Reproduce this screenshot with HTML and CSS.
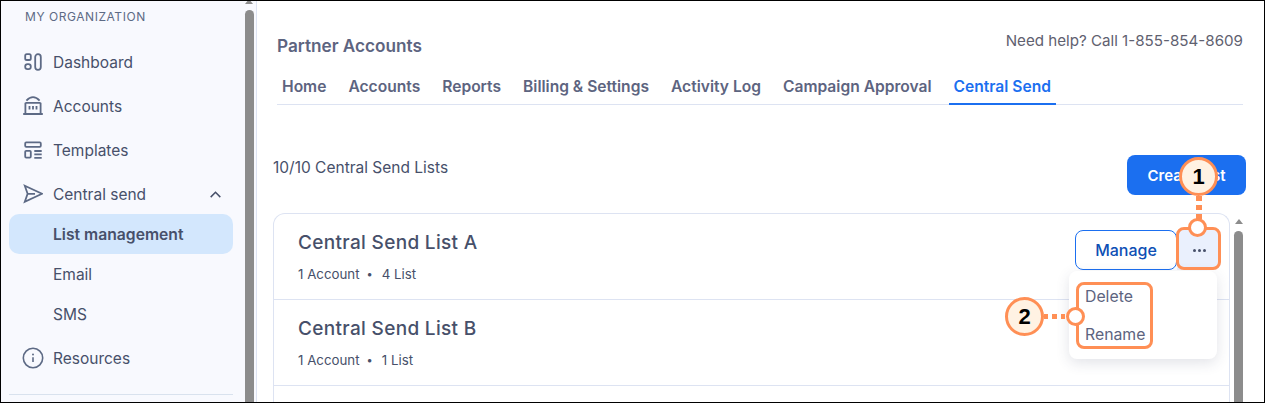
FILE: index.html
```html
<!DOCTYPE html>
<html lang="en">
<head>
<meta charset="utf-8">
<title>Central Send Lists</title>
<link rel="stylesheet" href="styles.css">
</head>
<body>
<div class="frame">
  <aside class="sidebar">
    <div class="org">MY ORGANIZATION</div>
    <nav class="nav">
      <a class="nav-item">
        <svg class="ico" viewBox="0 0 20 20"><rect x="2.2" y="2.2" width="5.6" height="5.8" rx="1.6"/><rect x="2.2" y="12.2" width="5.6" height="5" rx="2.4"/><rect x="12.2" y="2.2" width="5.6" height="15.6" rx="2.8"/></svg>
        <span>Dashboard</span>
      </a>
      <a class="nav-item">
        <svg class="ico" viewBox="0 0 20 20"><path d="M3.4 4.6C5.5 2.4 8 1.2 10 1.2s4.500 1.200 6.600 3.400M2.400 6.800h15.200M2.400 6.800V17M17.600 6.800V17M.2 18h19.600M6.500 10v3.600M10 10v3.600M13.500 10v3.600"/></svg>
        <span>Accounts</span>
      </a>
      <a class="nav-item">
        <svg class="ico" viewBox="0 0 20 20"><rect x="2.200" y="2.400" width="15.600" height="4.400" rx="1"/><rect x="2.200" y="10.800" width="5.600" height="6.800" rx="1"/><path d="M11.300 11h7.400M11.300 14.400h7.400M11.300 17.800h7.400"/></svg>
        <span>Templates</span>
      </a>
      <a class="nav-item">
        <svg class="ico" viewBox="0 0 20 20"><path d="M1.800 1.800 19 9.800 1.800 17.800 4.600 9.800ZM4.600 9.800H12"/></svg>
        <span>Central send</span>
        <svg class="chev" viewBox="0 0 14 8"><path d="M1.500 7 7 1.500 12.500 7"/></svg>
      </a>
      <a class="nav-item sub active"><span>List management</span></a>
      <a class="nav-item sub"><span>Email</span></a>
      <a class="nav-item sub"><span>SMS</span></a>
      <a class="nav-item last">
        <svg class="ico info" viewBox="0 0 22 22"><circle cx="11" cy="11" r="9.700"/><path d="M11 10.300v4.700"/><circle class="dot" cx="11" cy="7.500" r="1"/></svg>
        <span>Resources</span>
      </a>
    </nav>
    <div class="nav-rule"></div>
  </aside>
  <div class="side-scroll"><svg class="side-arrow" viewBox="0 2 8 3"><path d="M4 0 8 5H0Z"/></svg><div class="side-thumb"></div></div>
  <main class="main">
    <header class="top">
      <div class="top-row">
        <h1 class="title">Partner Accounts</h1>
        <div class="help">Need help? Call 1-855-854-8609</div>
      </div>
      <div class="tabs">
        <a class="tab">Home</a>
        <a class="tab">Accounts</a>
        <a class="tab">Reports</a>
        <a class="tab">Billing &amp; Settings</a>
        <a class="tab">Activity Log</a>
        <a class="tab">Campaign Approval</a>
        <a class="tab current">Central Send</a>
      </div>
    </header>
    <div class="bar">
      <div class="count">10/10 Central Send Lists</div>
      <button class="create">Create List</button>
    </div>
    <div class="list-wrap">
      <section class="card">
        <article class="row">
          <div>
            <h2 class="name">Central Send List A</h2>
            <div class="meta"><span>1 Account</span><i>•</i><span>4 List</span></div>
          </div>
          <div class="actions">
            <button class="manage">Manage</button>
            <button class="more"><b></b><b></b><b></b></button>
            <div class="menu">
              <div class="menu-item">Delete</div>
              <div class="menu-item">Rename</div>
            </div>
          </div>
        </article>
        <article class="row">
          <div>
            <h2 class="name">Central Send List B</h2>
            <div class="meta"><span>1 Account</span><i>•</i><span>1 List</span></div>
          </div>
        </article>
        <article class="row"></article>
      </section>
      <div class="list-scroll"><svg class="arrow" viewBox="0 0 8 5"><path d="M4 0 8 5H0Z"/></svg><div class="list-thumb"></div></div>
    </div>
  </main>
  <div class="callout-box box-more"></div>
  <div class="callout-box box-menu"></div>
  <div class="dots dots-v"></div>
  <div class="dots dots-h"></div>
  <div class="ring ring-1"></div>
  <div class="ring ring-2"></div>
  <div class="badge badge-1">1</div>
  <div class="badge badge-2">2</div>
</div>
</body>
</html>
```
FILE: styles.css
```css
* { box-sizing: border-box; }
html, body { margin: 0; padding: 0; }
body { font-family: "Inter", "Liberation Sans", sans-serif; color: #47506a; background: #fff; }
.frame {
  position: relative;
  display: flex;
  width: 1265px;
  height: 403px;
  overflow: hidden;
  background: #fff;
  border: 1px solid #000;
}
.sidebar {
  width: 242px;
  flex: none;
  padding: 8px 10px 0 8px;
  background: #f8f9fe;
  display: flex;
  flex-direction: column;
}
.org { font-size: 12px; line-height: 16px; letter-spacing: .55px; color: #5d6a85; padding-left: 16px; }
.nav { display: flex; flex-direction: column; margin-top: 15px; }
.nav-item {
  display: flex;
  align-items: center;
  height: 44px;
  padding-left: 14px;
  font-size: 15.5px;
  color: #47506a;
  gap: 10px;
}
.nav-item.sub { height: 40px; padding-left: 44px; }
.nav-item.active { margin-top: -2px; background: #d3e7fd; border-radius: 10px; font-weight: 600; font-size: 15.7px; }
.nav-item.last { margin-top: 2px; }
.ico { width: 20px; height: 20px; flex: none; fill: none; stroke: #5d6a85; stroke-width: 1.8; }
.info { width: 22px; height: 22px; margin-left: -1px; margin-right: -1px; stroke-width: 1.6; }
.info .dot { fill: #5d6a85; stroke: none; }
.chev { width: 13px; height: 7px; margin-left: auto; margin-right: 11px; fill: none; stroke: #47506a; stroke-width: 1.7; }
.nav-rule { height: 1px; background: #d9e2ee; margin-top: 14px; }
.side-scroll { width: 13px; flex: none; background: #f8f9fe; padding: 0 1px 0 2px; }
.side-arrow { display: block; width: 8px; height: 3px; fill: #8c8c8c; }
.side-thumb { width: 9px; height: 100%; margin-top: 6px; background: #8c8c8c; border-radius: 5px 5px 0 0; }
.main { flex: 1; min-width: 0; border-left: 1px solid #dde3f2; padding: 0 18px 0 16px; display: flex; flex-direction: column; }
.top { padding: 30px 3px 0 4px; }
.top-row { display: flex; justify-content: space-between; align-items: flex-start; }
.title { margin: 0; font-size: 17.200px; line-height: 30px; font-weight: 600; color: #5d6480; }
.help { font-size: 15.150px; line-height: 20px; color: #5f6170; }
.tabs { display: flex; gap: 12px; margin-top: 10px; border-bottom: 1px solid #dde3f2; }
.tab { padding: 0 5px; height: 33px; line-height: 32px; font-size: 15.6px; font-weight: 600; color: #5d6480; }
.tab.current { color: #1b6ff0; border-bottom: 2px solid #1b6ff0; margin-bottom: -1px; height: 34px; }
.bar { display: flex; justify-content: space-between; align-items: flex-start; margin-top: 50px; }
.count { font-size: 15.500px; line-height: 26px; color: #47506a; }
.create { width: 119px; height: 40px; border: 0; border-radius: 8px; background: #1b6ff0; color: #fff; font: 600 15px "Inter", sans-serif; }
.list-wrap { display: flex; margin-top: 18px; }
.card { flex: 1; min-width: 0; border: 1px solid #dde3f2; border-bottom: 0; border-radius: 12px 12px 0 0; }
.row { position: relative; display: flex; justify-content: space-between; height: 86px; padding: 16px 8px 0 24px; border-bottom: 1px solid #dde3f2; }
.name { margin: 1px 0 0; font-size: 19px; line-height: 24px; font-weight: 500; letter-spacing: .33px; color: #47506a; }
.meta { display: flex; margin-top: 10px; font-size: 13.300px; line-height: 18px; color: #47506a; }
.meta i { font-style: normal; margin: 0 9px 0 7px; font-size: 11px; }
.actions { display: flex; position: relative; align-items: flex-start; }
.manage { width: 102px; height: 40px; background: #fff; border: 1px solid #1b6ff0; border-radius: 8px; color: #0e4fb5; font: 500 16px "Inter", sans-serif; }
.more { display: flex; align-items: center; justify-content: center; gap: 2px; width: 44px; height: 40px; padding: 0; background: #eaf0fd; border: 0; border-radius: 0 8px 8px 0; }
.more b { width: 3px; height: 3px; border-radius: 50%; background: #47506a; }
.menu { position: absolute; top: 41px; right: 4px; width: 148px; height: 88px; padding: 12px 0 0 16px; background: #fff; border-radius: 8px; box-shadow: 0 4px 14px rgba(50,60,90,.14); z-index: 2; }
.menu-item { height: 38px; font-size: 15.800px; line-height: 28px; color: #5d6480; }
.list-scroll { width: 16px; flex: none; padding: 6px 0 0 4px; }
.arrow { display: block; width: 8px; height: 5px; margin-left: 1px; fill: #8c8c8c; }
.list-thumb { width: 9px; height: 300px; margin-top: 7px; background: #8c8c8c; border-radius: 5px 5px 0 0; }
.callout-box { position: absolute; border: 3px solid #ff8f55; border-radius: 8px; z-index: 3; }
.box-more { left: 1175px; top: 226px; width: 45px; height: 43px; }
.box-menu { left: 1075px; top: 281px; width: 77px; height: 67px; }
.dots { position: absolute; z-index: 3; }
.dots-v { left: 1195px; top: 195px; width: 6px; height: 26px; background: repeating-linear-gradient(to bottom, #ff8f55 0 5px, transparent 5px 9px); }
.dots-h { left: 1043px; top: 313px; width: 26px; height: 5px; background: repeating-linear-gradient(to right, #ff8f55 0 4px, transparent 4px 8.500px); }
.ring { position: absolute; width: 19px; height: 19px; background: #fff; border: 3px solid #ff8f55; border-radius: 50%; z-index: 4; }
.ring-1 { left: 1187px; top: 217px; }
.ring-2 { left: 1065px; top: 306px; }
.badge { position: absolute; width: 39px; height: 39px; display: flex; align-items: center; justify-content: center; background: #fff2e3; border: 3px solid #ff8f55; border-radius: 50%; z-index: 4; color: #000; font: 700 22px "Liberation Sans", sans-serif; }
.badge-1 { left: 1178px; top: 156px; }
.badge-2 { left: 1004px; top: 296px; }
```
